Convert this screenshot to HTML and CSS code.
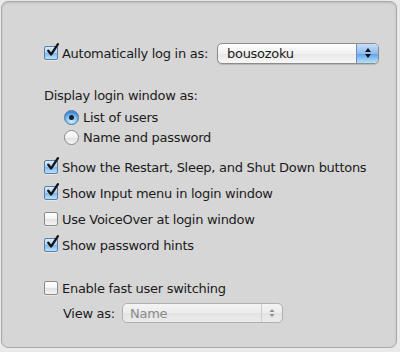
FILE: index.html
```html
<!DOCTYPE html>
<html lang="en">
<head>
    <meta charset="UTF-8">
    <title>Login Options</title>
    <link rel="stylesheet" href="styles.css">
</head>
<body>
    <div class="panel">
        <div class="row auto-row">
            <span class="check on">
                <svg viewBox="0 0 16 16"><path d="M3.5 8.2 L6.6 12.2 L13.8 1.2"/></svg>
            </span>
            <span class="label auto-label">Automatically log in as:</span>
            <div class="popup">
                <span class="popup-text">bousozoku</span>
                <span class="popup-arrows">
                    <svg viewBox="0 0 8 12"><path d="M4 1 L7 5 L1 5 Z M4 11 L7 7 L1 7 Z"/></svg>
                </span>
            </div>
        </div>

        <div class="row heading">Display login window as:</div>
        <div class="row radio-row">
            <span class="radio on"></span>
            <span class="label">List of users</span>
        </div>
        <div class="row radio-row">
            <span class="radio"></span>
            <span class="label">Name and password</span>
        </div>

        <div class="group">
            <div class="row">
                <span class="check on">
                    <svg viewBox="0 0 16 16"><path d="M3.5 8.2 L6.6 12.2 L13.8 1.2"/></svg>
                </span>
                <span class="label">Show the Restart, Sleep, and Shut Down buttons</span>
            </div>
            <div class="row">
                <span class="check on">
                    <svg viewBox="0 0 16 16"><path d="M3.5 8.2 L6.6 12.2 L13.8 1.2"/></svg>
                </span>
                <span class="label">Show Input menu in login window</span>
            </div>
            <div class="row">
                <span class="check"></span>
                <span class="label">Use VoiceOver at login window</span>
            </div>
            <div class="row">
                <span class="check on">
                    <svg viewBox="0 0 16 16"><path d="M3.5 8.2 L6.6 12.2 L13.8 1.2"/></svg>
                </span>
                <span class="label">Show password hints</span>
            </div>
        </div>

        <div class="row fast-row">
            <span class="check"></span>
            <span class="label">Enable fast user switching</span>
        </div>
        <div class="row view-row">
            <span class="label view-label">View as:</span>
            <div class="popup disabled">
                <span class="popup-text">Name</span>
                <span class="popup-arrows">
                    <svg viewBox="0 0 8 12"><path d="M4 2 L6.5 5 L1.5 5 Z M4 10 L6.5 7 L1.5 7 Z"/></svg>
                </span>
            </div>
        </div>
    </div>
</body>
</html>
```

FILE: styles.css
```css
body {
    margin: 0;
    background-color: #e9e9e9;
    font-family: "DejaVu Sans", Verdana, sans-serif;
    font-size: 13px;
    letter-spacing: -0.28px;
    color: #1b1b1b;
}

.panel {
    box-sizing: border-box;
    width: 396px;
    height: 347px;
    margin: 1px 0 0 1px;
    padding: 40px 0 0 42px;
    background-color: #d6d6d6;
    border: 1px solid #a9a9a9;
    border-radius: 7px;
    box-shadow: inset 0 1px 2px rgba(0, 0, 0, 0.12);
}

.row {
    display: flex;
    align-items: center;
    height: 20px;
}

.label {
    white-space: nowrap;
}

.auto-row {
    height: 22px;
}

.auto-label {
    width: 155px;
}

.heading {
    margin-top: 21px;
}

.radio-row {
    padding-left: 20px;
}

.heading + .radio-row {
    margin-top: 2px;
}

.group {
    display: flex;
    flex-direction: column;
    gap: 6px;
    margin-top: 10px;
}

.fast-row {
    margin-top: 23px;
}

.view-row {
    margin-top: 5px;
    padding-left: 19px;
}

.view-label {
    width: 59px;
}

/* checkboxes */
.check {
    position: relative;
    box-sizing: border-box;
    width: 14px;
    height: 14px;
    margin-right: 4px;
    flex: none;
    border: 1px solid #8a8a8a;
    border-radius: 2px;
    background: linear-gradient(#ffffff, #f3f3f3 50%, #e2e2e2 51%, #f4f4f4);
    box-shadow: 0 1px 0 rgba(255, 255, 255, 0.4);
}

.check.on {
    border-color: #5b7ca6;
    background: linear-gradient(#d8ebfb, #a9d0f3 50%, #7fb7ec 51%, #b9e0fb);
}

.check svg {
    position: absolute;
    left: 0;
    top: -4px;
    width: 15px;
    height: 15px;
    overflow: visible;
}

.check svg path {
    fill: none;
    stroke: #141414;
    stroke-width: 2.5;
    stroke-linecap: round;
    stroke-linejoin: round;
}

/* radio buttons */
.radio {
    position: relative;
    box-sizing: border-box;
    width: 15px;
    height: 15px;
    margin-right: 4px;
    flex: none;
    border: 1px solid #8a8a8a;
    border-radius: 50%;
    background: linear-gradient(#ffffff, #f2f2f2 50%, #e0e0e0 51%, #f6f6f6);
}

.radio.on {
    border-color: #4f72a0;
    background: radial-gradient(circle at 50% 80%, #c9ecff 0, #86c2f2 45%, #3f86d6 75%, #6aa8e6 100%);
}

.radio.on::after {
    content: "";
    position: absolute;
    left: 4px;
    top: 4px;
    width: 5px;
    height: 5px;
    border-radius: 50%;
    background-color: #161e2a;
}

/* pop-up menus */
.popup {
    box-sizing: border-box;
    display: flex;
    align-items: center;
    width: 162px;
    height: 21px;
    border: 1px solid #8c8c8c;
    border-radius: 5px;
    background: linear-gradient(#ffffff, #f1f1f1 50%, #e6e6e6 51%, #f8f8f8);
    box-shadow: 0 1px 1px rgba(0, 0, 0, 0.15);
    overflow: hidden;
}

.popup-text {
    flex: 1;
    padding-left: 9px;
}

.popup-arrows {
    display: flex;
    align-items: center;
    justify-content: center;
    width: 21px;
    height: 100%;
    border-left: 1px solid #6b8fbf;
    background: linear-gradient(#c7def6, #8fbdf0 50%, #5f9fe8 51%, #b7e2fb);
}

.popup-arrows svg {
    width: 8px;
    height: 12px;
    fill: #111;
}

.popup.disabled {
    width: 161px;
    height: 20px;
    border-color: #b0b0b0;
    background: linear-gradient(#f4f4f4, #ececec 50%, #e2e2e2 51%, #ececec);
    box-shadow: none;
}

.popup.disabled .popup-text {
    color: #8a8a8a;
    padding-left: 7px;
}

.popup.disabled .popup-arrows {
    width: 20px;
    border-left: 1px solid #cfcfcf;
    background: none;
}

.popup.disabled .popup-arrows svg {
    fill: #8f8f8f;
}
```
